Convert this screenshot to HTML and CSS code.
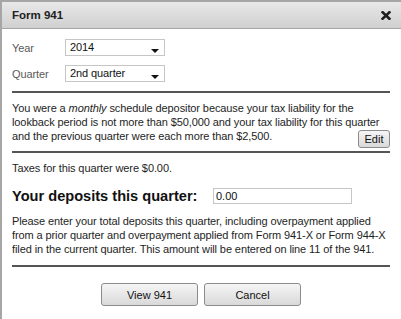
FILE: index.html
```html
<!DOCTYPE html>
<html lang="en">
<head>
    <meta charset="UTF-8">
    <title>Form 941</title>
    <link rel="stylesheet" href="styles.css">
</head>
<body>
    <div class="dialog">
        <!-- title bar -->
        <div class="titlebar">
            <span class="title">Form 941</span>
            <svg class="close" width="10" height="9" viewBox="0 0 10 9">
                <path d="M1.6 1.3 L8.4 7.7 M8.4 1.3 L1.6 7.7" stroke="#1e1e1e" stroke-width="2.6" stroke-linecap="square"/>
            </svg>
        </div>

        <div class="dialog-body">
            <!-- period -->
            <div class="field-row">
                <label class="field-label">Year</label>
                <div class="select">2014<span class="caret"></span></div>
            </div>
            <div class="field-row">
                <label class="field-label">Quarter</label>
                <div class="select">2nd quarter<span class="caret"></span></div>
            </div>

            <!-- depositor schedule -->
            <div class="schedule">
                <p>You were a <em>monthly</em> schedule depositor because your tax liability for the lookback period is not more than $50,000 and your tax liability for this quarter and the previous quarter were each more than $2,500.</p>
                <button class="btn btn-small">Edit</button>
            </div>

            <p class="taxes">Taxes for this quarter were $0.00.</p>

            <div class="deposits">
                <span class="deposits-label">Your deposits this quarter:</span>
                <input type="text" class="deposits-input" value="0.00">
            </div>

            <p class="note">Please enter your total deposits this quarter, including overpayment applied from a prior quarter and overpayment applied from Form 941-X or Form 944-X filed in the current quarter. This amount will be entered on line 11 of the 941.</p>

            <div class="actions">
                <button class="btn">View 941</button>
                <button class="btn">Cancel</button>
            </div>
        </div>
    </div>
</body>
</html>
```

FILE: styles.css
```css
/* page */
body {
    margin: 0;
    background: #ffffff;
    font-family: 'Liberation Sans', Arial, sans-serif;
    font-size: 11px;
    letter-spacing: -0.1px;
    color: #1e1e1e;
    overflow: hidden;
}

/* dialog frame */
.dialog {
    width: 401px;
    height: 319px;
    box-sizing: border-box;
    border-top: 2px solid #a6a6a6;
    border-left: 2px solid #a6a6a6;
    background: #ffffff;
}

.titlebar {
    display: flex;
    align-items: center;
    justify-content: space-between;
    height: 26px;
    padding: 0 0 0 10px;
    background: linear-gradient(#e8e8e8, #d0d0d0);
    border-bottom: 1px solid #a6a6a6;
}

.title {
    font-weight: bold;
    font-size: 11.5px;
    letter-spacing: 0;
    color: #222222;
}

.close {
    margin-right: 10px;
}

.dialog-body {
    width: 378px;
    padding: 10px 0 0 10px;
}

/* period selects */
.field-row {
    display: flex;
    align-items: center;
    height: 17px;
    margin-bottom: 9px;
}

.field-label {
    width: 53px;
    color: #5a5a5a;
}

.select {
    position: relative;
    width: 94px;
    height: 15px;
    padding-left: 4px;
    line-height: 15px;
    border: 1px solid #c6c6c6;
    color: #111111;
}

.caret {
    position: absolute;
    right: 5px;
    top: 9px;
    border-left: 4px solid transparent;
    border-right: 4px solid transparent;
    border-top: 4px solid #111111;
}

/* schedule text */
.schedule {
    display: grid;
    margin-top: 1px;
    padding: 8px 0 3px;
    border-top: 2px solid #555555;
    border-bottom: 2px solid #555555;
}

.schedule p {
    grid-area: 1 / 1;
    margin: 0 0 5px;
    line-height: 14px;
}

.btn {
    font-family: 'Liberation Sans', Arial, sans-serif;
    font-size: 11px;
    color: #111111;
    background: linear-gradient(#f5f5f5, #d9d9d9);
    border: 1px solid #8c8c8c;
    border-radius: 3px;
    padding: 0;
}

.btn-small {
    grid-area: 1 / 1;
    justify-self: end;
    align-self: end;
    width: 32px;
    height: 18px;
}

.taxes {
    margin: 8px 0 0;
    line-height: 14px;
}

/* deposits */
.deposits {
    display: flex;
    align-items: center;
    height: 17px;
    margin-top: 12px;
}

.deposits-label {
    width: 201px;
    font-size: 14.6px;
    font-weight: bold;
    letter-spacing: 0;
    color: #111111;
}

.deposits-input {
    width: 133px;
    height: 14px;
    padding: 0 2px;
    border: 1px solid #c6c6c6;
    font-family: 'Liberation Sans', Arial, sans-serif;
    font-size: 11px;
    color: #111111;
}

.note {
    margin: 10px 0 0;
    padding-bottom: 9px;
    line-height: 14px;
    border-bottom: 2px solid #555555;
}

/* footer buttons */
.actions {
    display: flex;
    justify-content: center;
    gap: 6px;
    padding-top: 16px;
}

.actions .btn {
    width: 97px;
    height: 23px;
}
```
